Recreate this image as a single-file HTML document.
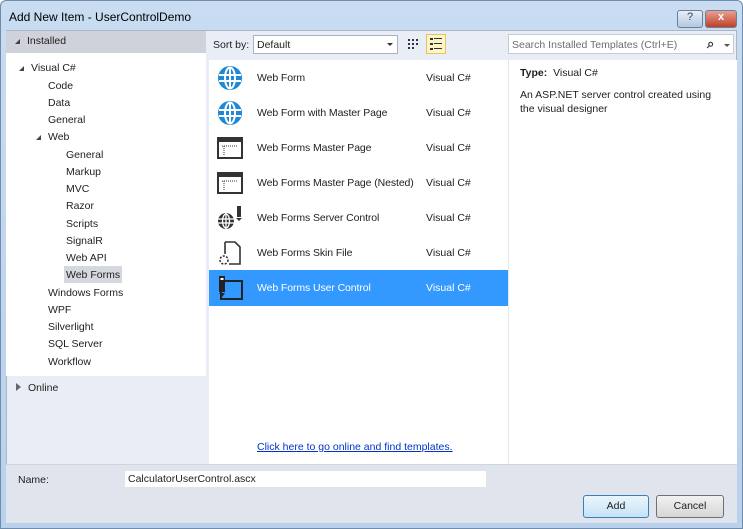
<!DOCTYPE html>
<html><head><meta charset="utf-8"><style>
*{margin:0;padding:0;box-sizing:border-box}
body{width:743px;height:529px;overflow:hidden;font-family:"Liberation Sans",sans-serif;font-size:10.5px;color:#1e1e1e;background:#fff}
.win{position:absolute;left:0;top:0;width:743px;height:529px;background:linear-gradient(#c9dcf1,#b9d1ec);border:1px solid #6f8cad;border-radius:6px 6px 0 0}
.title{position:absolute;left:8px;top:9px;font-size:12px;color:#000}
.btn{position:absolute;top:9px;height:18px;border:1px solid #6a7f9c;border-radius:3px}
.inner{position:absolute;left:6px;top:30px;width:731px;height:493px;background:#e9edf5;border:1px solid #a9b7c9}
.a{position:absolute;white-space:nowrap}
.tri{position:absolute;width:0;height:0;border-left:5px solid transparent;border-bottom:5px solid #444}
.item{position:absolute;left:209px;width:299px;height:35px}
.item .n{position:absolute;left:48px;top:12px;letter-spacing:-0.1px}
.item .l{position:absolute;left:217px;top:12px}
.ic{position:absolute;left:8px;top:5px;width:26px;height:26px}
</style></head><body>
<div class="win">
<div class="title">Add New Item - UserControlDemo</div>
<div class="btn" style="left:676px;width:26px;background:linear-gradient(#e6eef8,#b5c8de);text-align:center;font-size:11px;color:#345">?</div>
<div class="btn" style="left:704px;width:32px;background:linear-gradient(#e8a090,#c0402a);text-align:center;color:#fff;font-weight:bold;font-size:11px">x</div>
</div>
<div class="inner"></div>
<div class="a" style="left:6px;top:31px;width:200px;height:22px;background:#cfd2da"></div>
<div class="tri" style="left:15px;top:39px"></div>
<div class="a" style="left:27px;top:35px">Installed</div>
<div class="a" style="left:6px;top:53px;width:200px;height:323px;background:#fff"></div>
<div class="tri" style="left:19px;top:66px"></div>
<div class="a" style="left:31px;top:62px">Visual C#</div>
<div class="a" style="left:48px;top:80px">Code</div>
<div class="a" style="left:48px;top:97px">Data</div>
<div class="a" style="left:48px;top:114px">General</div>
<div class="tri" style="left:36px;top:135px"></div>
<div class="a" style="left:48px;top:131px">Web</div>
<div class="a" style="left:66px;top:149px">General</div>
<div class="a" style="left:66px;top:166px">Markup</div>
<div class="a" style="left:66px;top:183px">MVC</div>
<div class="a" style="left:66px;top:200px">Razor</div>
<div class="a" style="left:66px;top:218px">Scripts</div>
<div class="a" style="left:66px;top:235px">SignalR</div>
<div class="a" style="left:66px;top:252px">Web API</div>
<div class="a" style="left:64px;top:266px;width:58px;height:17px;background:#d5d8df"></div>
<div class="a" style="left:66px;top:269px">Web Forms</div>
<div class="a" style="left:48px;top:287px">Windows Forms</div>
<div class="a" style="left:48px;top:304px">WPF</div>
<div class="a" style="left:48px;top:321px">Silverlight</div>
<div class="a" style="left:48px;top:338px">SQL Server</div>
<div class="a" style="left:48px;top:356px">Workflow</div>
<div class="a" style="left:16px;top:383px;width:0;height:0;border-top:4px solid transparent;border-bottom:4px solid transparent;border-left:5px solid #666"></div>
<div class="a" style="left:28px;top:382px">Online</div>
<div class="a" style="left:213px;top:39px">Sort by:</div>
<div class="a" style="left:253px;top:35px;width:145px;height:19px;background:#fff;border:1px solid #a8b2c2"><span style="position:absolute;left:3px;top:3px">Default</span><span style="position:absolute;right:4px;top:7px;border-left:3px solid transparent;border-right:3px solid transparent;border-top:3px solid #333"></span></div>
<svg class="a" style="left:405px;top:36px" width="16" height="16"><g fill="#333"><rect x="3" y="3" width="2" height="2"/><rect x="7" y="3" width="2" height="2"/><rect x="11" y="3" width="2" height="2"/><rect x="3" y="7" width="2" height="2"/><rect x="7" y="7" width="2" height="2"/><rect x="11" y="7" width="2" height="2"/><rect x="3" y="11" width="2" height="2"/><rect x="7" y="11" width="2" height="2"/></g></svg>
<svg class="a" style="left:426px;top:34px" width="20" height="20"><rect x="0.5" y="0.5" width="19" height="19" fill="#fdf4c8" stroke="#e5c365"/><g fill="#333"><rect x="4" y="4" width="3" height="2"/><rect x="8" y="4" width="8" height="1"/><rect x="4" y="9" width="3" height="2"/><rect x="8" y="9" width="8" height="1"/><rect x="4" y="14" width="3" height="2"/><rect x="8" y="14" width="8" height="1"/></g></svg>
<div class="a" style="left:508px;top:34px;width:226px;height:20px;background:#fff;border:1px solid #c5cbd5"><span style="position:absolute;left:3px;top:4px;color:#6d6d6d">Search Installed Templates (Ctrl+E)</span><span style="position:absolute;left:198px;top:1px;font-size:13px;font-weight:bold;color:#333">&#x2315;</span><span style="position:absolute;left:215px;top:9px;border-left:3px solid transparent;border-right:3px solid transparent;border-top:3px solid #555"></span></div>
<div class="a" style="left:209px;top:60px;width:299px;height:404px;background:#fff"></div>
<div class="a" style="left:508px;top:60px;width:229px;height:404px;background:#fff;border-left:1px solid #e2e5ea"></div>
<div class="item" style="top:60px"><svg class="ic" viewBox="0 0 26 26"><circle cx="13" cy="13" r="12" fill="#1e88d6"/><g stroke="#fff" stroke-width="2" fill="none"><ellipse cx="13" cy="13" rx="5" ry="10.5"/><line x1="2" y1="10" x2="24" y2="10"/><line x1="2" y1="16" x2="24" y2="16"/><line x1="13" y1="2" x2="13" y2="24"/></g></svg><span class="n">Web Form</span><span class="l">Visual C#</span></div>
<div class="item" style="top:95px"><svg class="ic" viewBox="0 0 26 26"><circle cx="13" cy="13" r="12" fill="#1e88d6"/><g stroke="#fff" stroke-width="2" fill="none"><ellipse cx="13" cy="13" rx="5" ry="10.5"/><line x1="2" y1="10" x2="24" y2="10"/><line x1="2" y1="16" x2="24" y2="16"/><line x1="13" y1="2" x2="13" y2="24"/></g></svg><span class="n">Web Form with Master Page</span><span class="l">Visual C#</span></div>
<div class="item" style="top:130px"><svg class="ic" viewBox="0 0 26 26"><rect x="1" y="3" width="24" height="20" fill="#fff" stroke="#333" stroke-width="2"/><rect x="1" y="3" width="24" height="4" fill="#333"/><path d="M5 11h16M7 11v9" stroke="#333" stroke-dasharray="1 1"/></svg><span class="n">Web Forms Master Page</span><span class="l">Visual C#</span></div>
<div class="item" style="top:165px"><svg class="ic" viewBox="0 0 26 26"><rect x="1" y="3" width="24" height="20" fill="#fff" stroke="#333" stroke-width="2"/><rect x="1" y="3" width="24" height="4" fill="#333"/><path d="M5 11h16M7 11v9" stroke="#333" stroke-dasharray="1 1"/></svg><span class="n">Web Forms Master Page (Nested)</span><span class="l">Visual C#</span></div>
<div class="item" style="top:200px"><svg class="ic" viewBox="0 0 26 26"><circle cx="9" cy="16" r="8" fill="#333"/><g stroke="#fff" stroke-width="1.3" fill="none"><ellipse cx="9" cy="16" rx="3.5" ry="7"/><line x1="1" y1="14" x2="17" y2="14"/><line x1="1" y1="18" x2="17" y2="18"/><line x1="9" y1="8" x2="9" y2="24"/></g><rect x="20" y="1" width="4" height="11" fill="#333"/><path d="M19 13h6l-3 3z" fill="#333"/></svg><span class="n">Web Forms Server Control</span><span class="l">Visual C#</span></div>
<div class="item" style="top:235px"><svg class="ic" viewBox="0 0 26 26"><path d="M8 2h10l5 5v17H12M8 2v12" fill="none" stroke="#333" stroke-width="1.6"/><circle cx="7" cy="20" r="4" fill="none" stroke="#333" stroke-width="1.6" stroke-dasharray="2 1.5"/></svg><span class="n">Web Forms Skin File</span><span class="l">Visual C#</span></div>
<div class="item" style="top:270px;background:#3399ff;color:#fff;height:36px"><svg class="ic" viewBox="0 0 26 26"><rect x="4" y="6" width="21" height="18" fill="none" stroke="#222" stroke-width="2"/><rect x="2" y="1" width="6" height="16" fill="#222"/><rect x="3.5" y="3" width="3" height="2" fill="#fff"/><path d="M2 18h6l-3 4z" fill="#222"/></svg><span class="n">Web Forms User Control</span><span class="l">Visual C#</span></div>
<div class="a" style="left:257px;top:441px;color:#0033cc;text-decoration:underline">Click here to go online and find templates.</div>
<div class="a" style="left:520px;top:67px"><b>Type:</b>&nbsp; Visual C#</div>
<div class="a" style="left:520px;top:88px;line-height:14px">An ASP.NET server control created using<br>the visual designer</div>
<div class="a" style="left:6px;top:464px;width:731px;height:59px;background:#dfe4ed;border-top:1px solid #cfd5df"></div>
<div class="a" style="left:18px;top:474px">Name:</div>
<div class="a" style="left:124px;top:470px;width:363px;height:18px;background:#fff;border:1px solid #e0e3e8"><span style="position:absolute;left:3px;top:2px">CalculatorUserControl.ascx</span></div>
<div class="a" style="left:583px;top:495px;width:66px;height:23px;border:1px solid #3c7fb1;border-radius:3px;background:linear-gradient(#eaf6fd,#c6e2f5);text-align:center;line-height:21px">Add</div>
<div class="a" style="left:656px;top:495px;width:68px;height:23px;border:1px solid #707070;border-radius:3px;background:linear-gradient(#f2f2f2,#d6d6d6);text-align:center;line-height:21px">Cancel</div>
</body></html>
